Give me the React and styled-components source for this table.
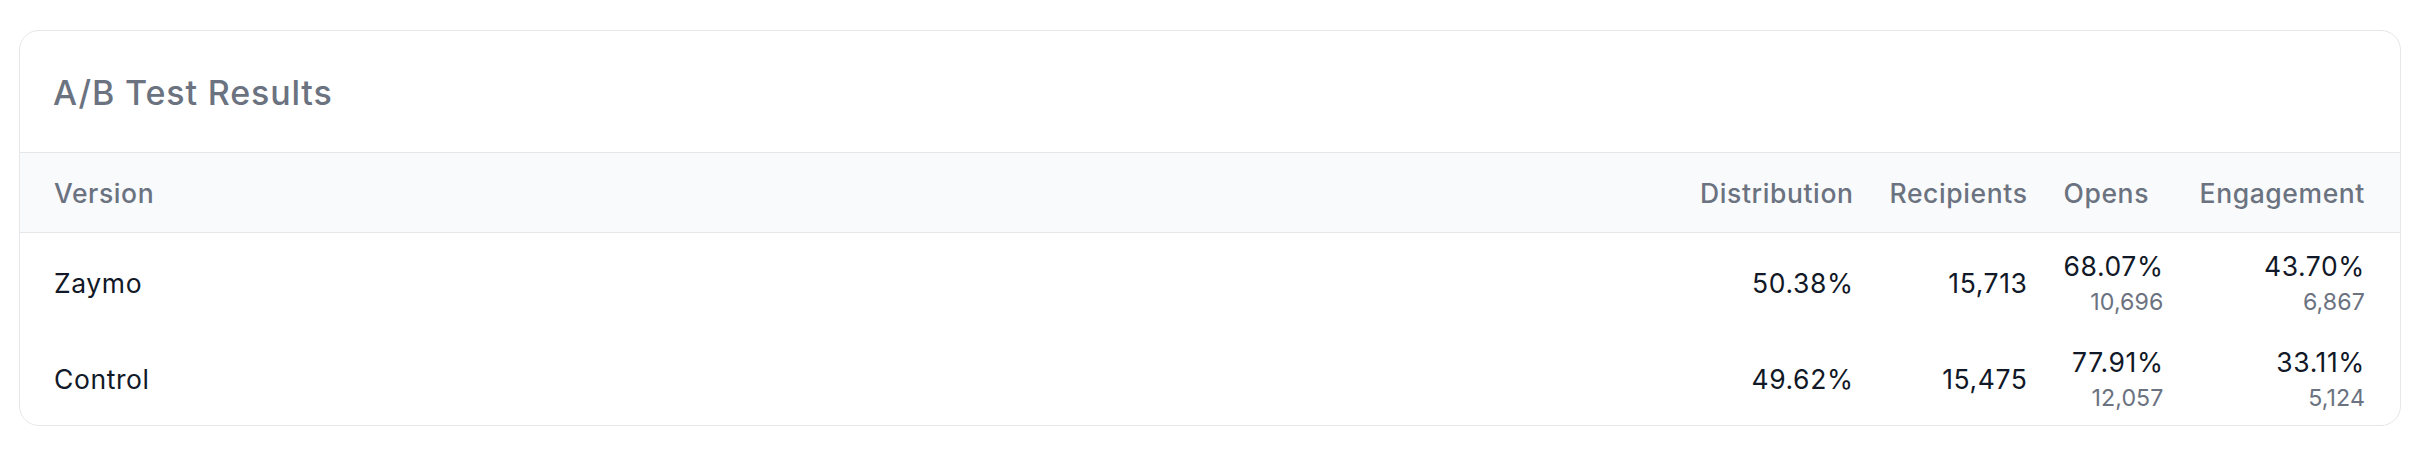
import React from "react";
import styled, { createGlobalStyle } from "styled-components";

const GlobalStyle = createGlobalStyle`
  html, body { margin: 0; padding: 0; background: #ffffff; }
  body { font-family: Inter, "Noto Sans", sans-serif; -webkit-font-smoothing: antialiased; }
`;

const Page = styled.div`
  padding: 30px 17px 0 19px;
`;

const Card = styled.section`
  border: 1px solid #e5e7eb;
  border-radius: 20px;
  background: #ffffff;
  overflow: hidden;
`;

const Title = styled.h2`
  margin: 0;
  padding: 39px 33px 36px;
  font-size: 34px;
  line-height: 46px;
  font-weight: 500;
  letter-spacing: 0.85px;
  color: #6b7280;
`;

const Table = styled.table`
  width: 100%;
  border-collapse: collapse;
  border-spacing: 0;
`;

const HeadRow = styled.tr`
  background: #f9fafb;
  border-top: 1px solid #e5e7eb;
  border-bottom: 1px solid #e5e7eb;
`;

const Th = styled.th`
  padding: 21px 18px 19px;
  font-size: 26.5px;
  line-height: 39px;
  font-weight: 500;
  letter-spacing: 0.6px;
  color: #6b7280;
  white-space: nowrap;
  text-align: ${(p) => p.$align || "right"};
  &:first-child { padding-left: 34px; width: 100%; }
  &:last-child { padding-right: 35px; }
`;

const Row = styled.tr`
  height: 96px;
`;

const Td = styled.td`
  padding: 13px 18px 10px;
  font-size: 26.5px;
  line-height: 40px;
  font-weight: 400;
  letter-spacing: 0.6px;
  color: #111827;
  white-space: nowrap;
  vertical-align: middle;
  text-align: ${(p) => p.$align || "right"};
  &:first-child { padding-left: 34px; }
  &:last-child { padding-right: 35px; }
`;

const Main = styled.div`
  font-size: 26.5px;
  line-height: 40px;
  color: #111827;
`;

const Sub = styled.div`
  font-size: 23.2px;
  line-height: 33px;
  letter-spacing: 0.1px;
  color: #6b7280;
`;

const rows = [
  {
    name: "Zaymo",
    distribution: "50.38%",
    recipients: "15,713",
    opens: "68.07%",
    opensCount: "10,696",
    engagement: "43.70%",
    engagementCount: "6,867",
  },
  {
    name: "Control",
    distribution: "49.62%",
    recipients: "15,475",
    opens: "77.91%",
    opensCount: "12,057",
    engagement: "33.11%",
    engagementCount: "5,124",
  },
];

export default function App() {
  return (
    <>
      <GlobalStyle />
      <Page>
        <Card>
          <Title>A/B Test Results</Title>
          <Table>
            <thead>
              <HeadRow>
                <Th $align="left">Version</Th>
                <Th>Distribution</Th>
                <Th>Recipients</Th>
                <Th $align="left">Opens</Th>
                <Th>Engagement</Th>
              </HeadRow>
            </thead>
            <tbody>
              {rows.map((r) => (
                <Row key={r.name}>
                  <Td $align="left">{r.name}</Td>
                  <Td>{r.distribution}</Td>
                  <Td>{r.recipients}</Td>
                  <Td>
                    <Main>{r.opens}</Main>
                    <Sub>{r.opensCount}</Sub>
                  </Td>
                  <Td>
                    <Main>{r.engagement}</Main>
                    <Sub>{r.engagementCount}</Sub>
                  </Td>
                </Row>
              ))}
            </tbody>
          </Table>
        </Card>
      </Page>
    </>
  );
}
